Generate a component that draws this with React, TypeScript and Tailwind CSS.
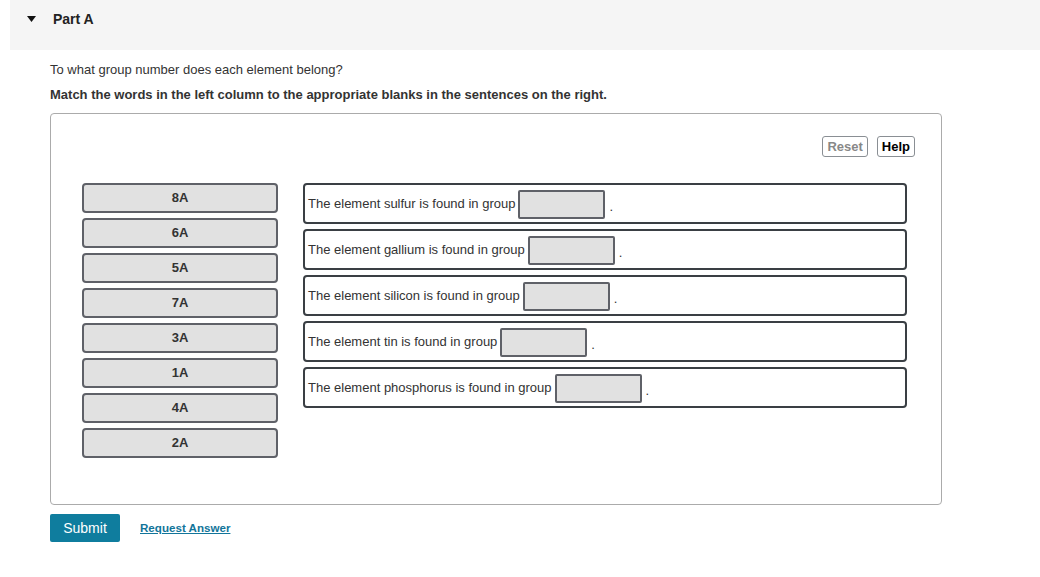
import type React from 'react';

const tiles = ['8A', '6A', '5A', '7A', '3A', '1A', '4A', '2A'];

const sentences = ['sulfur', 'gallium', 'silicon', 'tin', 'phosphorus'];

const Tile = ({ label }: { label: string }) => (
  <div className="flex h-[30px] w-[196px] items-center justify-center rounded-[4px] border-2 border-[#5f6168] bg-[#e1e1e1] text-[13px] font-bold text-[#333]">
    {label}
  </div>
);

const Sentence = ({ element }: { element: string }) => (
  <div className="flex h-[41px] w-[604px] items-center rounded-[4px] border-2 border-[#3a3f44] bg-white pl-[3px] text-[13px] text-[#333]">
    <span>The element {element} is found in group</span>
    <span className="ml-[3px] mt-[1px] h-[29px] w-[87px] rounded-[2px] border-2 border-[#5f6168] bg-[#e1e1e1]" />
    <span className="ml-[4px] mt-[6px]">.</span>
  </div>
);

const App: React.FC = () => {
  return (
    <div className="min-h-[577px] w-[1040px] bg-white font-['Liberation_Sans',Arial,sans-serif] text-[#333]">
      <div className="ml-[10px] flex h-[50px] items-start bg-[#f5f5f5] pt-[9px]">
        <svg width="9" height="6" viewBox="0 0 9 6" className="ml-[17px] mt-[7px]">
          <path d="M0 0 L9 0 L4.5 6 Z" fill="#111" />
        </svg>
        <span className="ml-[17px] text-[14px] font-bold text-[#222]">Part A</span>
      </div>

      <div className="ml-[50px] w-[892px]">
        <p className="mt-[12px] text-[13px] leading-[16px]">To what group number does each element belong?</p>
        <p className="mt-[9px] text-[13px] font-bold leading-[16px]">
          Match the words in the left column to the appropriate blanks in the sentences on the right.
        </p>

        <div className="mt-[10px] h-[392px] rounded-[4px] border border-[#ababab]">
          <div className="flex justify-end gap-[9px] pr-[26px] pt-[22px]">
            <button className="h-[21px] rounded-[3px] border border-[#8a8f94] bg-white px-[4px] text-[13px] font-bold leading-[15px] text-[#888]">
              Reset
            </button>
            <button className="h-[21px] rounded-[3px] border border-[#8a8f94] bg-white px-[4px] text-[13px] font-bold leading-[15px] text-black">
              Help
            </button>
          </div>

          <div className="mt-[26px] flex gap-[25px] pl-[31px]">
            <div className="flex flex-col gap-[5px]">
              {tiles.map((t) => (
                <Tile key={t} label={t} />
              ))}
            </div>
            <div className="flex flex-col gap-[5px]">
              {sentences.map((s) => (
                <Sentence key={s} element={s} />
              ))}
            </div>
          </div>
        </div>

        <div className="mt-[9px] flex items-center">
          <button className="h-[28px] w-[70px] rounded-[2px] bg-[#0f7d9e] text-[14px] text-white">Submit</button>
          <a href="#" className="ml-[20px] text-[11.6px] font-bold text-[#12759a] underline">
            Request Answer
          </a>
        </div>
      </div>
    </div>
  );
};

export default App;
